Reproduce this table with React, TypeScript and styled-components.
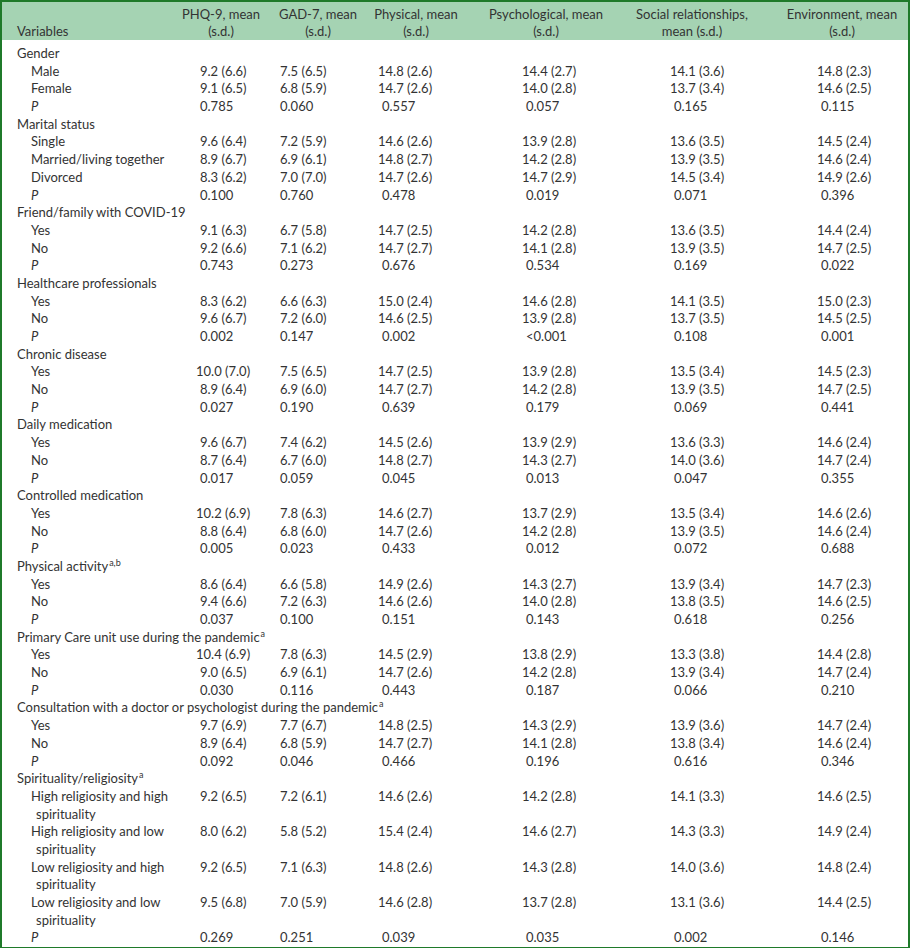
import React from 'react';
import styled, { createGlobalStyle } from 'styled-components';

const GlobalStyle = createGlobalStyle`
  html, body {
    margin: 0;
    padding: 0;
    background: #ffffff;
  }
  body {
    font-family: Lato, "Open Sans", "Liberation Sans", sans-serif;
    color: #333333;
  }
`;

const COLS = '174px 90px 104px 92px 168px 146px 132px';
// left padding of one-digit values in each data column
const BASE = [24, 14, 12, 64, 44, 45];
const HEAD_SHIFT = [0, 0, 0, 0, 22, 0];

const Frame = styled.div`
  width: 906px;
  border: 2px solid #1f7a2a;
  background: #ffffff;
`;

const HeaderRow = styled.div`
  display: grid;
  grid-template-columns: ${COLS};
  background: #a5d3b3;
  height: 38px;
  align-items: end;
  font-size: 13px;
  line-height: 17px;
`;

const HeadLabel = styled.div`
  padding-left: 15px;
`;

const HeadCell = styled.div<{ $shift: number }>`
  text-align: center;
  padding-right: ${(p) => p.$shift}px;
`;

const Body = styled.div`
  display: grid;
  grid-template-columns: ${COLS};
  padding-top: 5px;
  font-size: 13px;
  line-height: 17.68px;
`;

const GroupLabel = styled.div`
  grid-column: 1 / -1;
  padding-left: 15px;
`;

const RowLabel = styled.div<{ $italic?: boolean }>`
  padding-left: 29px;
  font-style: ${(p) => (p.$italic ? 'italic' : 'normal')};
`;

const WrapLine = styled.span`
  display: block;
  & + & {
    padding-left: 5px;
  }
`;

const DataCell = styled.div<{ $pad: number }>`
  padding-left: ${(p) => p.$pad}px;
  white-space: nowrap;
`;

const Sup = styled.sup`
  font-size: 9px;
  line-height: 0;
  vertical-align: 5px;
  margin-left: 1px;
`;

type Row = { label: string[]; values: string[] };
type Group = { title: string; sup?: string; rows: Row[]; p: string[] };

const YN = (yes: string[], no: string[]): Row[] => [
  { label: ['Yes'], values: yes },
  { label: ['No'], values: no },
];

const groups: Group[] = [
  {
    title: 'Gender',
    rows: [
      { label: ['Male'], values: ['9.2 (6.6)', '7.5 (6.5)', '14.8 (2.6)', '14.4 (2.7)', '14.1 (3.6)', '14.8 (2.3)'] },
      { label: ['Female'], values: ['9.1 (6.5)', '6.8 (5.9)', '14.7 (2.6)', '14.0 (2.8)', '13.7 (3.4)', '14.6 (2.5)'] },
    ],
    p: ['0.785', '0.060', '0.557', '0.057', '0.165', '0.115'],
  },
  {
    title: 'Marital status',
    rows: [
      { label: ['Single'], values: ['9.6 (6.4)', '7.2 (5.9)', '14.6 (2.6)', '13.9 (2.8)', '13.6 (3.5)', '14.5 (2.4)'] },
      { label: ['Married/living together'], values: ['8.9 (6.7)', '6.9 (6.1)', '14.8 (2.7)', '14.2 (2.8)', '13.9 (3.5)', '14.6 (2.4)'] },
      { label: ['Divorced'], values: ['8.3 (6.2)', '7.0 (7.0)', '14.7 (2.6)', '14.7 (2.9)', '14.5 (3.4)', '14.9 (2.6)'] },
    ],
    p: ['0.100', '0.760', '0.478', '0.019', '0.071', '0.396'],
  },
  {
    title: 'Friend/family with COVID-19',
    rows: YN(
      ['9.1 (6.3)', '6.7 (5.8)', '14.7 (2.5)', '14.2 (2.8)', '13.6 (3.5)', '14.4 (2.4)'],
      ['9.2 (6.6)', '7.1 (6.2)', '14.7 (2.7)', '14.1 (2.8)', '13.9 (3.5)', '14.7 (2.5)'],
    ),
    p: ['0.743', '0.273', '0.676', '0.534', '0.169', '0.022'],
  },
  {
    title: 'Healthcare professionals',
    rows: YN(
      ['8.3 (6.2)', '6.6 (6.3)', '15.0 (2.4)', '14.6 (2.8)', '14.1 (3.5)', '15.0 (2.3)'],
      ['9.6 (6.7)', '7.2 (6.0)', '14.6 (2.5)', '13.9 (2.8)', '13.7 (3.5)', '14.5 (2.5)'],
    ),
    p: ['0.002', '0.147', '0.002', '<0.001', '0.108', '0.001'],
  },
  {
    title: 'Chronic disease',
    rows: YN(
      ['10.0 (7.0)', '7.5 (6.5)', '14.7 (2.5)', '13.9 (2.8)', '13.5 (3.4)', '14.5 (2.3)'],
      ['8.9 (6.4)', '6.9 (6.0)', '14.7 (2.7)', '14.2 (2.8)', '13.9 (3.5)', '14.7 (2.5)'],
    ),
    p: ['0.027', '0.190', '0.639', '0.179', '0.069', '0.441'],
  },
  {
    title: 'Daily medication',
    rows: YN(
      ['9.6 (6.7)', '7.4 (6.2)', '14.5 (2.6)', '13.9 (2.9)', '13.6 (3.3)', '14.6 (2.4)'],
      ['8.7 (6.4)', '6.7 (6.0)', '14.8 (2.7)', '14.3 (2.7)', '14.0 (3.6)', '14.7 (2.4)'],
    ),
    p: ['0.017', '0.059', '0.045', '0.013', '0.047', '0.355'],
  },
  {
    title: 'Controlled medication',
    rows: YN(
      ['10.2 (6.9)', '7.8 (6.3)', '14.6 (2.7)', '13.7 (2.9)', '13.5 (3.4)', '14.6 (2.6)'],
      ['8.8 (6.4)', '6.8 (6.0)', '14.7 (2.6)', '14.2 (2.8)', '13.9 (3.5)', '14.6 (2.4)'],
    ),
    p: ['0.005', '0.023', '0.433', '0.012', '0.072', '0.688'],
  },
  {
    title: 'Physical activity',
    sup: 'a,b',
    rows: YN(
      ['8.6 (6.4)', '6.6 (5.8)', '14.9 (2.6)', '14.3 (2.7)', '13.9 (3.4)', '14.7 (2.3)'],
      ['9.4 (6.6)', '7.2 (6.3)', '14.6 (2.6)', '14.0 (2.8)', '13.8 (3.5)', '14.6 (2.5)'],
    ),
    p: ['0.037', '0.100', '0.151', '0.143', '0.618', '0.256'],
  },
  {
    title: 'Primary Care unit use during the pandemic',
    sup: 'a',
    rows: YN(
      ['10.4 (6.9)', '7.8 (6.3)', '14.5 (2.9)', '13.8 (2.9)', '13.3 (3.8)', '14.4 (2.8)'],
      ['9.0 (6.5)', '6.9 (6.1)', '14.7 (2.6)', '14.2 (2.8)', '13.9 (3.4)', '14.7 (2.4)'],
    ),
    p: ['0.030', '0.116', '0.443', '0.187', '0.066', '0.210'],
  },
  {
    title: 'Consultation with a doctor or psychologist during the pandemic',
    sup: 'a',
    rows: YN(
      ['9.7 (6.9)', '7.7 (6.7)', '14.8 (2.5)', '14.3 (2.9)', '13.9 (3.6)', '14.7 (2.4)'],
      ['8.9 (6.4)', '6.8 (5.9)', '14.7 (2.7)', '14.1 (2.8)', '13.8 (3.4)', '14.6 (2.4)'],
    ),
    p: ['0.092', '0.046', '0.466', '0.196', '0.616', '0.346'],
  },
  {
    title: 'Spirituality/religiosity',
    sup: 'a',
    rows: [
      { label: ['High religiosity and high', 'spirituality'], values: ['9.2 (6.5)', '7.2 (6.1)', '14.6 (2.6)', '14.2 (2.8)', '14.1 (3.3)', '14.6 (2.5)'] },
      { label: ['High religiosity and low', 'spirituality'], values: ['8.0 (6.2)', '5.8 (5.2)', '15.4 (2.4)', '14.6 (2.7)', '14.3 (3.3)', '14.9 (2.4)'] },
      { label: ['Low religiosity and high', 'spirituality'], values: ['9.2 (6.5)', '7.1 (6.3)', '14.8 (2.6)', '14.3 (2.8)', '14.0 (3.6)', '14.8 (2.4)'] },
      { label: ['Low religiosity and low', 'spirituality'], values: ['9.5 (6.8)', '7.0 (5.9)', '14.6 (2.8)', '13.7 (2.8)', '13.1 (3.6)', '14.4 (2.5)'] },
    ],
    p: ['0.269', '0.251', '0.039', '0.035', '0.002', '0.146'],
  },
];

const headers = [
  ['PHQ-9, mean', '(s.d.)'],
  ['GAD-7, mean', '(s.d.)'],
  ['Physical, mean', '(s.d.)'],
  ['Psychological, mean', '(s.d.)'],
  ['Social relationships,', 'mean (s.d.)'],
  ['Environment, mean', '(s.d.)'],
];

// two-digit means sit a little to the left of one-digit ones
const padFor = (value: string, col: number) => {
  const intPart = value.replace('<', '').split('.')[0];
  return intPart.length > 1 ? BASE[col] - 4 : BASE[col];
};

function Values({ values }: { values: string[] }) {
  return (
    <>
      {values.map((v, i) => (
        <DataCell key={i} $pad={padFor(v, i)}>
          {v}
        </DataCell>
      ))}
    </>
  );
}

export default function App() {
  return (
    <>
      <GlobalStyle />
      <Frame>
        <HeaderRow>
          <HeadLabel>Variables</HeadLabel>
          {headers.map((h, i) => (
            <HeadCell key={i} $shift={HEAD_SHIFT[i]}>
              {h[0]}
              <br />
              {h[1]}
            </HeadCell>
          ))}
        </HeaderRow>
        <Body>
          {groups.map((g) => (
            <React.Fragment key={g.title}>
              <GroupLabel>
                {g.title}
                {g.sup && <Sup>{g.sup}</Sup>}
              </GroupLabel>
              {g.rows.map((r) => (
                <React.Fragment key={r.label.join(' ')}>
                  <RowLabel>
                    {r.label.map((l) => (
                      <WrapLine key={l}>{l}</WrapLine>
                    ))}
                  </RowLabel>
                  <Values values={r.values} />
                </React.Fragment>
              ))}
              <RowLabel $italic>P</RowLabel>
              <Values values={g.p} />
            </React.Fragment>
          ))}
        </Body>
      </Frame>
    </>
  );
}
